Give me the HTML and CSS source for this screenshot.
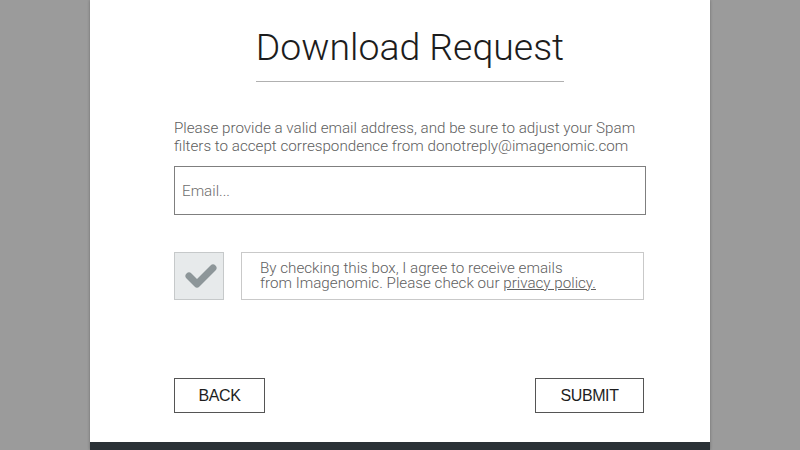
FILE: index.html
```html
<!DOCTYPE html>
<html lang="en">
<head>
<meta charset="utf-8">
<title>Download Request</title>
<link rel="stylesheet" href="styles.css">
</head>
<body>
<div class="panel">
  <div class="content">
    <div class="title-wrap"><h1 class="title">Download Request</h1></div>
    <p class="intro">Please provide a valid email address, and be sure to adjust your Spam filters to accept correspondence from donotreply@imagenomic.com</p>
    <input class="email" type="text" placeholder="Email...">
    <div class="consent">
      <div class="checkbox">
        <svg width="34" height="26" viewBox="0 0 34 26"><polyline points="5,13 13,21 29,5" fill="none" stroke="#8d9699" stroke-width="7" stroke-linecap="round" stroke-linejoin="round"/></svg>
      </div>
      <div class="consent-text">By checking this box, I agree to receive emails<br>from Imagenomic. Please check our <a class="link" href="#">privacy policy.</a></div>
    </div>
    <div class="actions">
      <button class="btn btn-back">BACK</button>
      <button class="btn btn-submit">SUBMIT</button>
    </div>
  </div>
  <div class="footer"></div>
</div>
</body>
</html>
```
FILE: styles.css
```css
html, body {
  margin: 0;
  padding: 0;
}
body {
  background: #9b9b9b;
  font-family: Roboto, "Liberation Sans", sans-serif;
  height: 450px;
  overflow: hidden;
}
.panel {
  width: 620px;
  height: 450px;
  margin: 0 auto;
  background: #fff;
  display: flex;
  flex-direction: column;
  box-shadow: 0 0 3px rgba(0,0,0,0.3);
}
.content {
  width: 472px;
  margin-left: 84px;
  padding-top: 25px;
  display: flex;
  flex-direction: column;
}
.title-wrap {
  display: flex;
  justify-content: center;
}
.title {
  margin: 0;
  font-weight: 300;
  font-size: 37.4px;
  line-height: 44px;
  color: #1c1c1c;
  padding-bottom: 12px;
  border-bottom: 1px solid #b0b0b0;
}
.intro {
  margin: 37px 0 0;
  font-size: 15.2px;
  font-weight: 300;
  line-height: 18px;
  color: #5e5e5e;
}
.email {
  margin-top: 11px;
  height: 49px;
  box-sizing: border-box;
  border: 1px solid #7f7f7f;
  padding: 0 7px;
  font-family: Roboto, sans-serif;
  font-size: 15.2px;
  font-weight: 300;
  color: #333;
  outline: none;
}
.email::placeholder {
  color: #6e6e6e;
}
.consent {
  margin-top: 37px;
  display: flex;
  gap: 17px;
  height: 48px;
}
.checkbox {
  width: 50px;
  box-sizing: border-box;
  background: #e7eaeb;
  border: 1px solid #c6c9ca;
  display: flex;
  align-items: center;
  justify-content: center;
  padding-left: 3px;
}
.consent-text {
  width: 403px;
  box-sizing: border-box;
  border: 1px solid #c9c9c9;
  padding: 8px 0 0 18px;
  font-size: 15.2px;
  font-weight: 300;
  line-height: 15px;
  color: #606060;
}
.link {
  color: #606060;
  text-decoration: underline;
}
.actions {
  margin-top: 78px;
  display: flex;
  justify-content: space-between;
  padding-right: 2px;
}
.btn {
  height: 35px;
  box-sizing: border-box;
  background: #fff;
  border: 1px solid #555;
  font-family: "Liberation Sans", Arial, sans-serif;
  font-size: 16px;
  letter-spacing: -0.4px;
  color: #1e1e1e;
  padding: 0;
  cursor: pointer;
}
.btn-back {
  width: 91px;
}
.btn-submit {
  width: 109px;
}
.footer {
  margin-top: auto;
  height: 8px;
  background: #2a3136;
}
```
